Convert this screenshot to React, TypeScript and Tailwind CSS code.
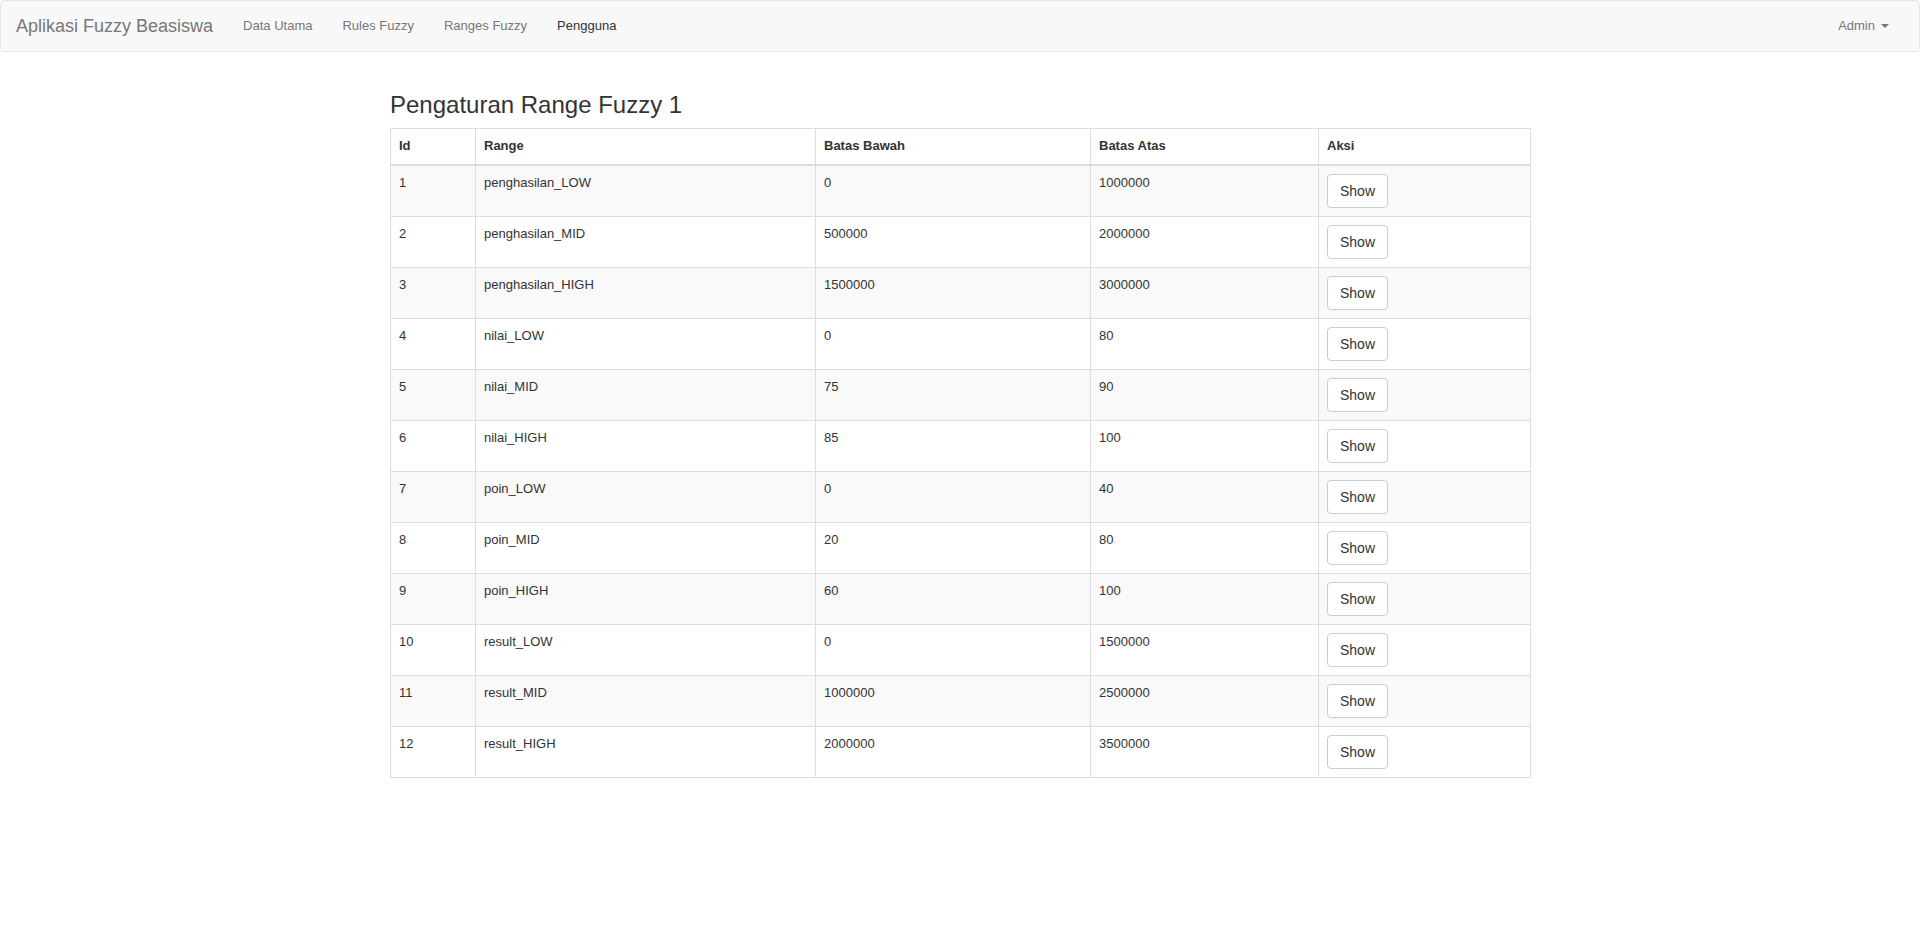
import React from 'react';

interface RangeRow {
  id: number;
  range: string;
  bawah: string;
  atas: string;
}

const rows: RangeRow[] = [
  { id: 1, range: 'penghasilan_LOW', bawah: '0', atas: '1000000' },
  { id: 2, range: 'penghasilan_MID', bawah: '500000', atas: '2000000' },
  { id: 3, range: 'penghasilan_HIGH', bawah: '1500000', atas: '3000000' },
  { id: 4, range: 'nilai_LOW', bawah: '0', atas: '80' },
  { id: 5, range: 'nilai_MID', bawah: '75', atas: '90' },
  { id: 6, range: 'nilai_HIGH', bawah: '85', atas: '100' },
  { id: 7, range: 'poin_LOW', bawah: '0', atas: '40' },
  { id: 8, range: 'poin_MID', bawah: '20', atas: '80' },
  { id: 9, range: 'poin_HIGH', bawah: '60', atas: '100' },
  { id: 10, range: 'result_LOW', bawah: '0', atas: '1500000' },
  { id: 11, range: 'result_MID', bawah: '1000000', atas: '2500000' },
  { id: 12, range: 'result_HIGH', bawah: '2000000', atas: '3500000' },
];

const navLinks = ['Data Utama', 'Rules Fuzzy', 'Ranges Fuzzy', 'Pengguna'];

export default function App() {
  return (
    <div className="min-h-screen bg-white font-['Liberation_Sans',Arial,sans-serif] text-[13px] leading-[18.57px] text-[#333]">
      {/* Navbar */}
      <nav className="h-[52px] bg-[#f8f8f8] border border-[#e7e7e7] rounded-[4px] flex items-center justify-between pr-[15px]">
        <div className="flex items-center h-full">
          <a className="px-[15px] text-[18px] leading-[20px] text-[#777]">Aplikasi Fuzzy Beasiswa</a>
          <ul className="flex">
            {navLinks.map((l, i) => (
              <li key={l}>
                <a className={`block px-[15px] ${i === 3 ? 'text-[#333]' : 'text-[#777]'}`}>{l}</a>
              </li>
            ))}
          </ul>
        </div>
        <a className="flex items-center px-[15px] text-[#777]">
          Admin
          <span className="ml-[6px] w-0 h-0 border-t-[4px] border-t-[#777] border-x-[4px] border-x-transparent" />
        </a>
      </nav>

      {/* Content */}
      <div className="w-[1170px] mx-auto px-[15px] pt-[20px]">
        <h3 className="mt-[20px] mb-[10px] text-[24px] leading-[26px] font-medium">Pengaturan Range Fuzzy 1</h3>
        <table className="w-[1140px] table-fixed border-collapse border border-[#ddd]">
          <colgroup>
            <col className="w-[85px]" />
            <col className="w-[340px]" />
            <col className="w-[275px]" />
            <col className="w-[228px]" />
            <col className="w-[212px]" />
          </colgroup>
          <thead>
            <tr>
              {['Id', 'Range', 'Batas Bawah', 'Batas Atas', 'Aksi'].map((h) => (
                <th key={h} className="p-[8px] text-left font-bold align-bottom border border-[#ddd] border-b-2">
                  {h}
                </th>
              ))}
            </tr>
          </thead>
          <tbody>
            {rows.map((r, idx) => (
              <tr key={r.id} className={idx % 2 === 0 ? 'bg-[#f9f9f9]' : 'bg-white'}>
                <td className="p-[8px] align-top border border-[#ddd]">{r.id}</td>
                <td className="p-[8px] align-top border border-[#ddd]">{r.range}</td>
                <td className="p-[8px] align-top border border-[#ddd]">{r.bawah}</td>
                <td className="p-[8px] align-top border border-[#ddd]">{r.atas}</td>
                <td className="p-[8px] align-top border border-[#ddd]">
                  <button className="h-[34px] px-[12px] py-[6px] bg-white border border-[#ccc] rounded-[4px] text-[#333] text-[14px] leading-[20px]">
                    Show
                  </button>
                </td>
              </tr>
            ))}
          </tbody>
        </table>
      </div>
    </div>
  );
}
